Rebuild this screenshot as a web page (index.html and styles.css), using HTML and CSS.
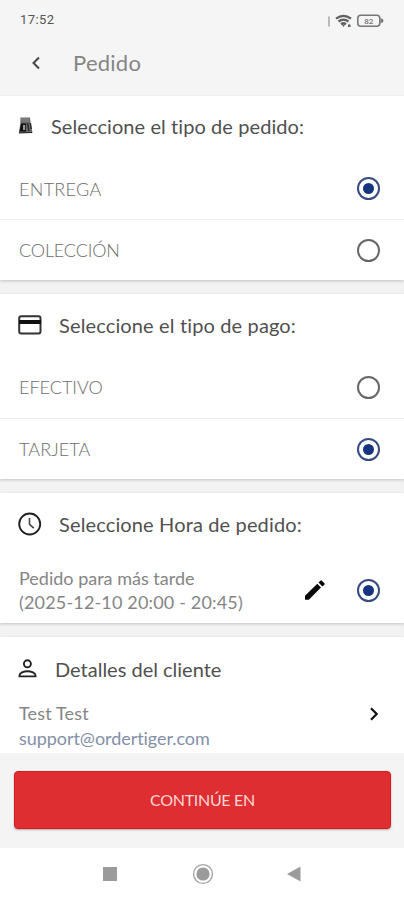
FILE: index.html
```html
<!DOCTYPE html>
<html lang="es">
<head>
<meta charset="utf-8">
<title>Pedido</title>
<link rel="stylesheet" href="styles.css">
</head>
<body>
<div class="app">
  <header class="header">
    <div class="status">
      <span class="time">17:52</span>
      <svg class="status-icons" width="56" height="16" viewBox="0 0 56 16">
        <path d="M1 4.500v10" stroke="#999" stroke-width="1.300"/>
        <g fill="none" stroke="#606060" stroke-width="2.300">
          <path d="M8 6.700q7.500-5.600 15 0M10.500 9.500q5-3.700 10 0M13 12.200q2.500-1.800 5 0"/>
        </g>
        <path d="M13.800 12.500h3.400L15.500 15zM20 12.500h2.500v2.500h-2.500z" fill="#606060"/>
        <rect x="29.800" y="3.300" width="22" height="10.900" rx="3" fill="none" stroke="#777" stroke-width="1.600"/>
        <path d="M52.700 6.200l2.600 1.400v2.400l-2.600 1.300z" fill="#777"/>
        <text class="battery" x="40.800" y="11.500" text-anchor="middle">82</text>
      </svg>
    </div>
    <div class="titlebar">
      <svg class="back" width="12" height="14" viewBox="0 0 12 14"><path d="M9 1.500L3.500 7 9 12.500" fill="none" stroke="#444" stroke-width="2"/></svg>
      <h1 class="title">Pedido</h1>
    </div>
  </header>

  <main class="content">
    <section class="card">
      <div class="card-head">
        <svg class="icon-bag" width="16" height="18" viewBox="0 0 16 18">
          <path d="M2.500 0.500h9.500l.5 5 2 10.500H.8L2.300 7z" fill="#666"/>
          <path d="M3.200 2h8M3.500 4h8" stroke="#999" stroke-width=".8"/>
          <path d="M3 6.500h5v8H1.500z" fill="#111"/>
          <path d="M5 8h2.200v5H5z" fill="#999"/>
          <path d="M9.500 6l1.500 8M1 16l13-.5M12.500 6l.8 6" stroke="#222" stroke-width="1.200"/>
        </svg>
        <h2 class="heading h-order">Seleccione el tipo de pedido:</h2>
      </div>
      <div class="row divided"><span class="option o-entrega">ENTREGA</span><span class="radio on"></span></div>
      <div class="row"><span class="option o-coleccion">COLECCIÓN</span><span class="radio"></span></div>
    </section>

    <section class="card card-pay">
      <div class="card-head">
        <svg class="icon-lg" width="24" height="20" viewBox="0 0 24 20">
          <rect x="1.200" y="1.200" width="21.300" height="17.300" rx="2" fill="none" stroke="#333" stroke-width="2"/>
          <path d="M1 5h22v4H1z" fill="#111"/>
        </svg>
        <h2 class="heading h-pay">Seleccione el tipo de pago:</h2>
      </div>
      <div class="row divided"><span class="option o-efectivo">EFECTIVO</span><span class="radio"></span></div>
      <div class="row"><span class="option o-tarjeta">TARJETA</span><span class="radio on"></span></div>
    </section>

    <section class="card card-time">
      <div class="card-head">
        <svg class="icon-lg" width="24" height="24" viewBox="0 0 24 24">
          <circle cx="11.700" cy="12" r="10.500" fill="none" stroke="#222" stroke-width="1.900"/>
          <path d="M11.500 6v6.300l4.300 3.900" fill="none" stroke="#444" stroke-width="1.600"/>
        </svg>
        <h2 class="heading h-time">Seleccione Hora de pedido:</h2>
      </div>
      <div class="time-row">
        <div class="lines"><div class="line l-later">Pedido para más tarde</div><div class="line l-date">(2025-12-10 20:00 - 20:45)</div></div>
        <svg class="pencil" width="22" height="22" viewBox="0 0 22 22"><path d="M1 16.700L13.300 4.800l3.700 3.700L4.800 20.700H1zM14.500 3.600l1.900-1.900q.8-.7 1.500 0l2.500 2.500q.7.800 0 1.500l-2 1.800z" fill="#080808"/></svg>
        <span class="radio on"></span>
      </div>
    </section>

    <section class="card card-client">
      <div class="card-head">
        <svg class="icon-user" width="19" height="19" viewBox="0 0 19 19">
          <circle cx="9.400" cy="4.800" r="3.500" fill="none" stroke="#222" stroke-width="1.900"/>
          <path d="M1.500 17.400v-1.200c0-2.200 4.200-4 8-4s8 1.800 8 4v1.200z" fill="none" stroke="#222" stroke-width="1.900"/>
        </svg>
        <h2 class="heading h-client">Detalles del cliente</h2>
      </div>
      <div class="client-row">
        <div class="lines"><div class="line l-name">Test Test</div><div class="line email">support@ordertiger.com</div></div>
        <svg class="next" width="10" height="14" viewBox="0 0 10 14"><path d="M2 1.300L7.700 7 2 12.700" fill="none" stroke="#111" stroke-width="2.200"/></svg>
      </div>
    </section>
  </main>

  <footer class="footer"><button class="cta">CONTINÚE EN</button></footer>
  <nav class="nav">
    <svg width="14" height="14"><path d="M0 0h14v14H0z" fill="#9b9b9b"/></svg>
    <svg class="home" width="22" height="22"><circle cx="11" cy="11" r="9.400" fill="none" stroke="#a5a5a5" stroke-width="1.400"/><circle cx="11" cy="11" r="6.600" fill="#9b9b9b"/></svg>
    <svg width="14" height="16"><path d="M0 8L13.500.5v15z" fill="#9b9b9b"/></svg>
  </nav>
</div>
</body>
</html>
```
FILE: styles.css
```css
* { box-sizing: border-box; }
body { margin: 0; background: #fff; font-family: Lato, "Open Sans", sans-serif; font-variant-ligatures: none; }
h1, h2 { margin: 0; font-weight: 400; }
svg { display: block; flex: none; }
.app { width: 404px; height: 900px; display: flex; flex-direction: column; overflow: hidden; }

.header { height: 96px; background: #f5f5f5; border-bottom: 1px solid #eee; }
.status { height: 40px; padding: 0 20px 0 20px; display: flex; align-items: center; justify-content: space-between; }
.time { font: 400 13px/16px Roboto, sans-serif; letter-spacing: .45px; color: #555; }
.battery { font: 500 8px Roboto, sans-serif; fill: #777; }
.titlebar { height: 46px; padding-left: 30px; display: flex; align-items: center; }
.title { margin-left: 31px; font-size: 22px; line-height: 28px; letter-spacing: .25px; color: #858585; }

.content { flex: 1; display: flex; flex-direction: column; gap: 14px; background: #f2f2f2; overflow: hidden; }
.card { background: #fff; box-shadow: 0 1px 3px rgba(0, 0, 0, .2); flex: none; }
.card-head { height: 62px; padding-left: 18px; display: flex; align-items: center; }
.heading { font-size: 20px; line-height: 26px; color: #505050; white-space: nowrap; }
.h-order { margin-bottom: 2px; letter-spacing: .08px; }
.h-pay, .h-time { letter-spacing: .14px; }
.h-client { margin-top: 2px; }
.icon-bag { margin-right: 17px; margin-bottom: 2px; }
.icon-lg { margin-right: 17px; }
.icon-user { margin-right: 18px; }
.row { height: 60px; padding: 0 24px 0 19px; display: flex; align-items: center; justify-content: space-between; }
.divided { height: 62px; border-bottom: 1px solid #eee; }
.card-pay .divided { height: 63px; }
.option { font-size: 18px; line-height: 24px; color: #6c6c6c; font-weight: 300; }
.o-entrega { letter-spacing: .3px; }
.o-coleccion { letter-spacing: -.15px; }
.o-tarjeta { letter-spacing: .1px; }
.radio { width: 23px; height: 23px; flex: none; border: 2px solid #666; border-radius: 50%; display: grid; place-items: center; }
.radio.on { border-color: #354b82; }
.radio.on::after { content: ""; width: 11px; height: 11px; border-radius: 50%; background: #153580; }

.card-time { height: 130px; }
.time-row { height: 68px; padding: 2px 24px 0 19px; display: flex; align-items: center; }
.line { font-size: 18px; line-height: 24px; color: #858585; white-space: nowrap; }
.l-date { letter-spacing: .17px; }
.l-name { letter-spacing: .15px; }
.lines { flex: 1; }
.pencil { margin: 0 31px 0 0; }
.card-client { height: 118px; }
.client-row { height: 50px; padding: 0 25px 0 19px; display: flex; align-items: flex-start; margin-top: 2px; }
.card-client .line { line-height: 25px; }
.card-client .email { color: #8490a8; letter-spacing: -.05px; }
.next { margin-top: 6px; }

.footer { height: 95px; padding: 18px 13px 19px 14px; background: #f4f4f4; }
.cta { display: block; width: 100%; height: 58px; padding: 0; border: 1px solid #d61b20; border-radius: 4px; background: #df2e31; color: #ffd6d6; font: 400 16px/20px Lato, sans-serif; letter-spacing: -.3px; box-shadow: 0 1px 2px rgba(0, 0, 0, .3); }
.nav { height: 52px; padding: 0 103px 0 103px; display: flex; align-items: center; justify-content: space-between; background: #fff; }
.home { margin-left: 2px; }
```
